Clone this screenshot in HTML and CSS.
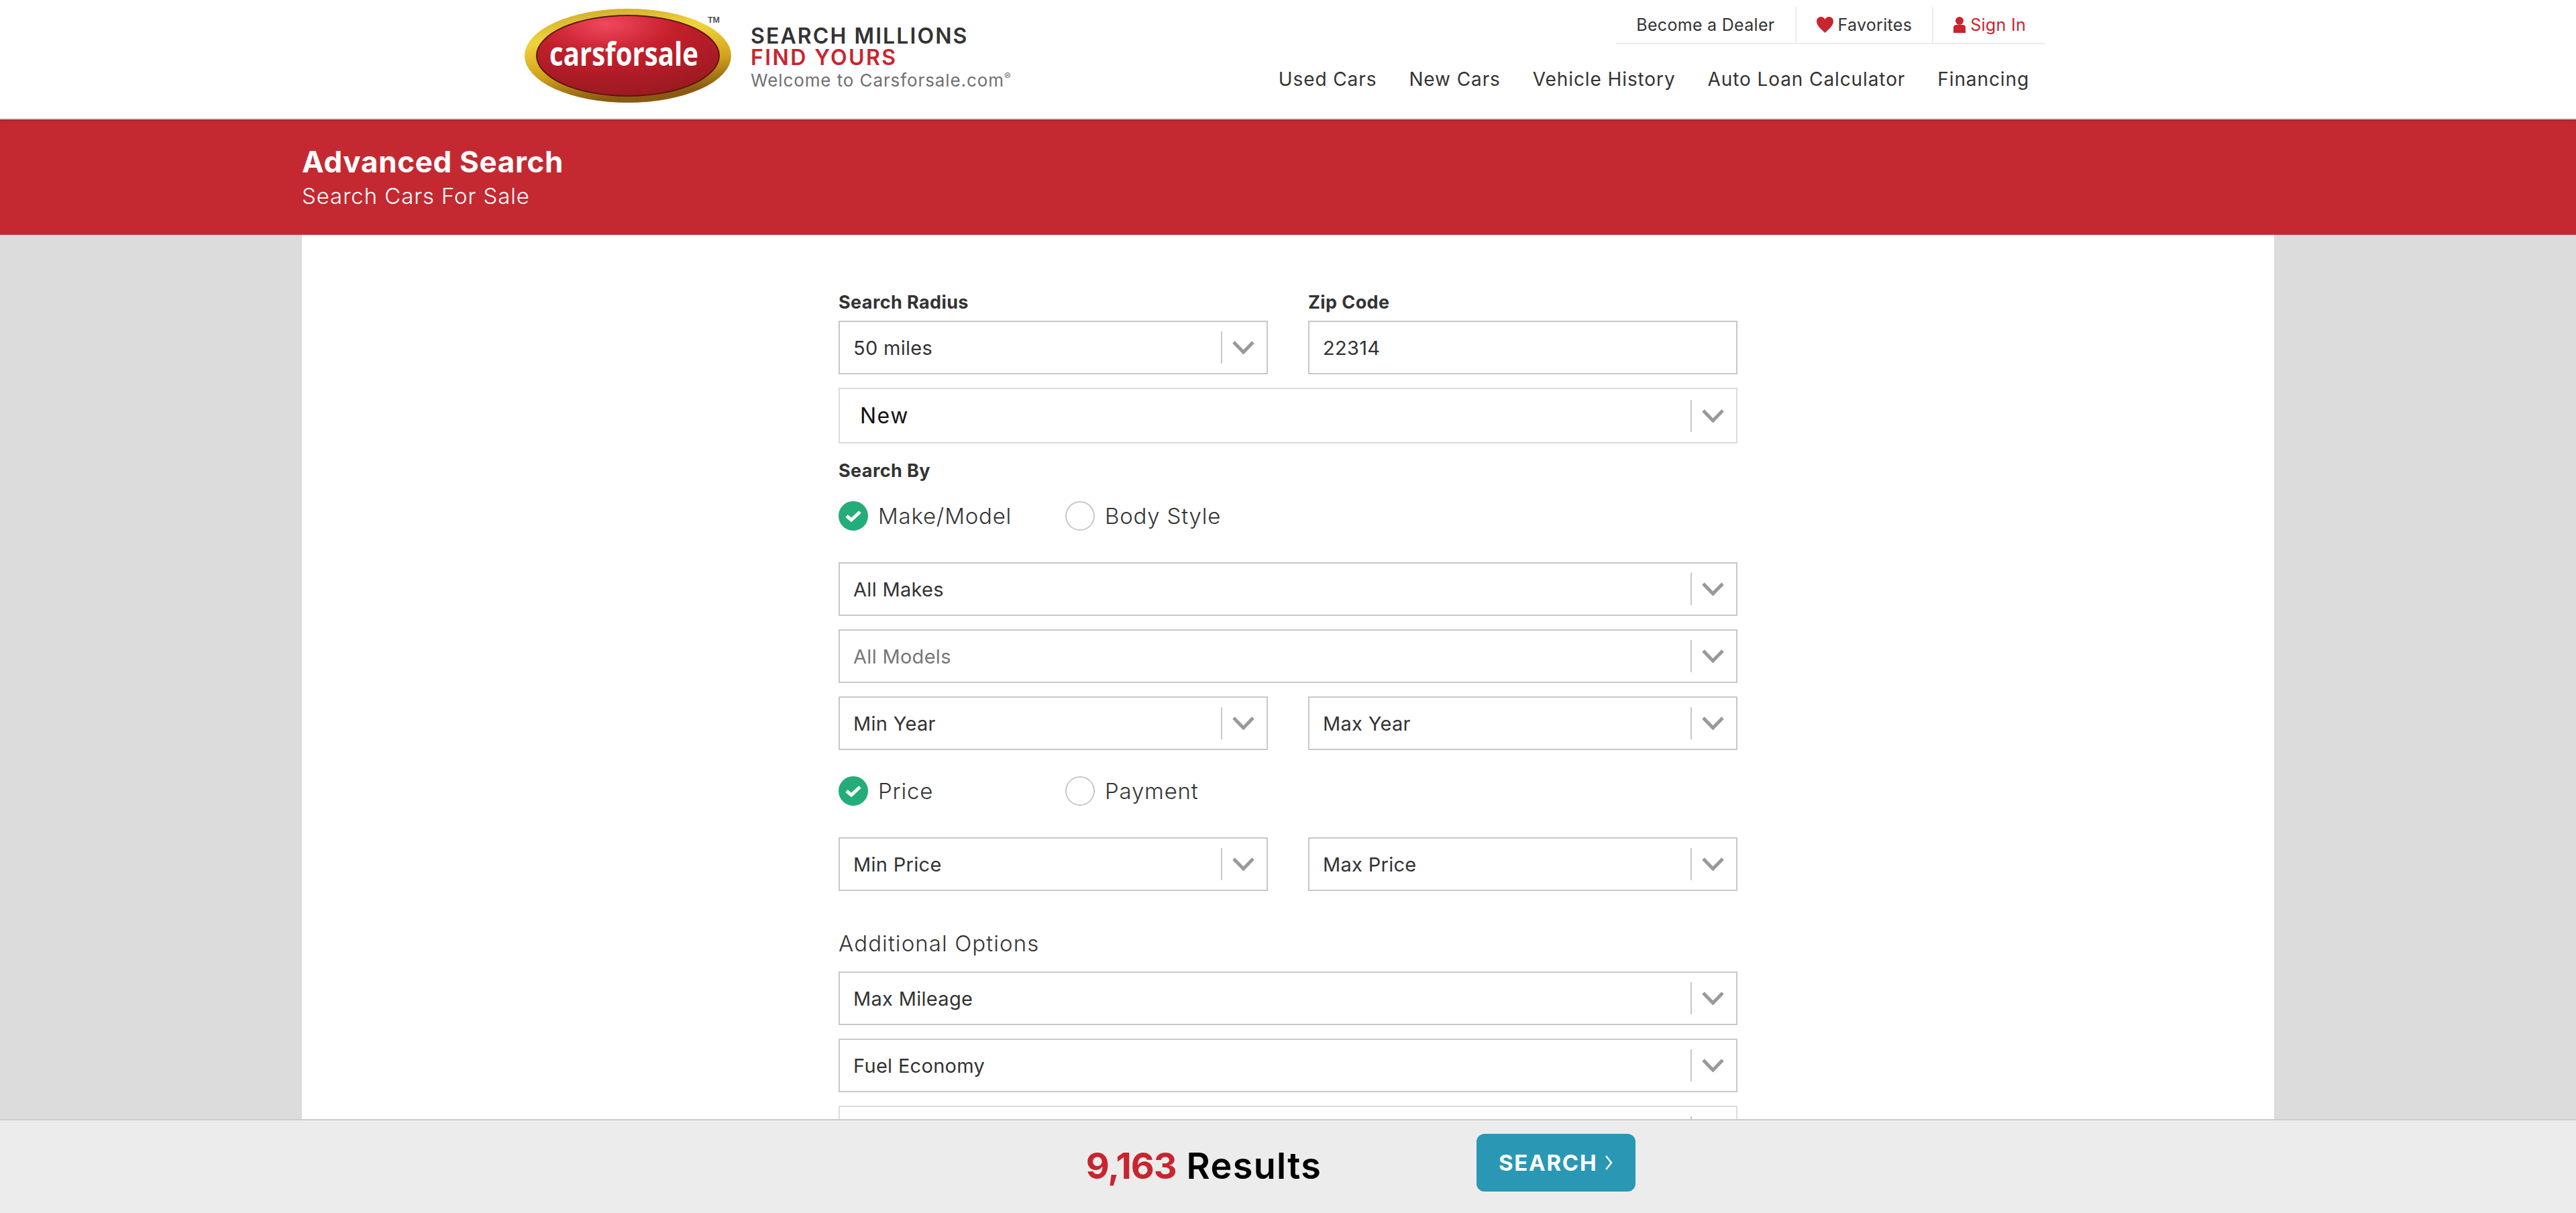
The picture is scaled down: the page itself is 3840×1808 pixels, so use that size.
FILE: index.html
```html
<!DOCTYPE html>
<html lang="en">
<head>
    <meta charset="UTF-8">
    <title>Advanced Search - Carsforsale.com</title>
    <link rel="stylesheet" href="styles.css">
</head>
<body>

    <header class="site-header">
        <div class="brand">
            <svg class="logo" width="320" height="150" viewBox="0 0 320 150">
                <defs>
                    <linearGradient id="gold" x1="0" y1="0" x2="0.25" y2="1">
                        <stop offset="0" stop-color="#c9a227"/>
                        <stop offset="0.35" stop-color="#f0d43c"/>
                        <stop offset="0.7" stop-color="#d2a21c"/>
                        <stop offset="1" stop-color="#8a5a12"/>
                    </linearGradient>
                    <radialGradient id="ruby" cx="0.38" cy="0.1" r="0.85">
                        <stop offset="0" stop-color="#f0485f"/>
                        <stop offset="0.45" stop-color="#c41f2b"/>
                        <stop offset="1" stop-color="#a01a22"/>
                    </radialGradient>
                </defs>
                <ellipse cx="155" cy="80" rx="154" ry="70" fill="url(#gold)"/>
                <ellipse cx="155" cy="80" rx="137" ry="61" fill="#5c1512"/>
                <ellipse cx="155" cy="80" rx="135" ry="59" fill="url(#ruby)"/>
                <text class="logo-word" x="38" y="95" textLength="222" lengthAdjust="spacingAndGlyphs">carsforsale</text>
                <text class="logo-tm" x="274" y="31" textLength="18" lengthAdjust="spacingAndGlyphs">TM</text>
            </svg>
            <div class="tagline">
                <div class="tag-one">SEARCH MILLIONS</div>
                <div class="tag-two">FIND YOURS</div>
                <div class="tag-three">Welcome to Carsforsale.com<sup>®</sup></div>
            </div>
        </div>
        <nav class="site-nav">
            <div class="top-links">
                <a class="top-link">Become a Dealer</a>
                <a class="top-link">
                    <svg class="icon-heart" width="25" height="24" viewBox="0 0 25 24"><path d="M12.5 24C9 20 0 14 0 7C0 3 2.8 0 6.5 0C9.2 0 11.4 1.6 12.5 4C13.6 1.6 15.8 0 18.5 0C22.2 0 25 3 25 7C25 14 16 20 12.5 24Z"/></svg>
                    Favorites
                </a>
                <a class="top-link top-link-red">
                    <svg class="icon-user" width="18" height="24" viewBox="0 0 18 24"><circle cx="9" cy="6" r="6"/><path d="M0 24V16C0 13.5 2 12 4 12H14C16 12 18 13.5 18 16V24Z"/></svg>
                    Sign In
                </a>
            </div>
            <div class="main-links">
                <a>Used Cars</a>
                <a>New Cars</a>
                <a>Vehicle History</a>
                <a>Auto Loan Calculator</a>
                <a>Financing</a>
            </div>
        </nav>
    </header>

    <section class="title-bar">
        <h1>Advanced Search</h1>
        <p>Search Cars For Sale</p>
    </section>

    <main class="page">
        <div class="sheet">
            <form class="search-form">

                <div class="two-col">
                    <div>
                        <div class="field-label">Search Radius</div>
                        <div class="select">
                            <span class="select-text">50 miles</span>
                            <span class="select-sep"></span>
                            <svg class="chevron" width="33" height="20" viewBox="0 0 33 20"><path d="M2 2L16.5 17L31 2"/></svg>
                        </div>
                    </div>
                    <div>
                        <div class="field-label">Zip Code</div>
                        <input class="text-input" type="text" value="22314">
                    </div>
                </div>

                <div class="select select-big">
                    <span class="select-text">New</span>
                    <span class="select-sep"></span>
                    <svg class="chevron" width="33" height="20" viewBox="0 0 33 20"><path d="M2 2L16.5 17L31 2"/></svg>
                </div>

                <div class="field-label search-by">Search By</div>
                <div class="radio-row radio-row-first">
                    <div class="radio-item">
                        <span class="radio radio-on">
                            <svg width="24" height="20" viewBox="0 0 24 20"><path d="M2 10L9 16L22 4"/></svg>
                        </span>
                        Make/Model
                    </div>
                    <div class="radio-item">
                        <span class="radio"></span>
                        Body Style
                    </div>
                </div>

                <div class="select select-makes">
                    <span class="select-text">All Makes</span>
                    <span class="select-sep"></span>
                    <svg class="chevron" width="33" height="20" viewBox="0 0 33 20"><path d="M2 2L16.5 17L31 2"/></svg>
                </div>
                <div class="select">
                    <span class="select-text select-text-off">All Models</span>
                    <span class="select-sep"></span>
                    <svg class="chevron" width="33" height="20" viewBox="0 0 33 20"><path d="M2 2L16.5 17L31 2"/></svg>
                </div>
                <div class="two-col two-col-next">
                    <div class="select">
                        <span class="select-text">Min Year</span>
                        <span class="select-sep"></span>
                        <svg class="chevron" width="33" height="20" viewBox="0 0 33 20"><path d="M2 2L16.5 17L31 2"/></svg>
                    </div>
                    <div class="select">
                        <span class="select-text">Max Year</span>
                        <span class="select-sep"></span>
                        <svg class="chevron" width="33" height="20" viewBox="0 0 33 20"><path d="M2 2L16.5 17L31 2"/></svg>
                    </div>
                </div>

                <div class="radio-row radio-row-price">
                    <div class="radio-item">
                        <span class="radio radio-on">
                            <svg width="24" height="20" viewBox="0 0 24 20"><path d="M2 10L9 16L22 4"/></svg>
                        </span>
                        Price
                    </div>
                    <div class="radio-item">
                        <span class="radio"></span>
                        Payment
                    </div>
                </div>

                <div class="two-col two-col-price">
                    <div class="select">
                        <span class="select-text">Min Price</span>
                        <span class="select-sep"></span>
                        <svg class="chevron" width="33" height="20" viewBox="0 0 33 20"><path d="M2 2L16.5 17L31 2"/></svg>
                    </div>
                    <div class="select">
                        <span class="select-text">Max Price</span>
                        <span class="select-sep"></span>
                        <svg class="chevron" width="33" height="20" viewBox="0 0 33 20"><path d="M2 2L16.5 17L31 2"/></svg>
                    </div>
                </div>

                <h2 class="options-title">Additional Options</h2>
                <div class="select select-mileage">
                    <span class="select-text">Max Mileage</span>
                    <span class="select-sep"></span>
                    <svg class="chevron" width="33" height="20" viewBox="0 0 33 20"><path d="M2 2L16.5 17L31 2"/></svg>
                </div>
                <div class="select">
                    <span class="select-text">Fuel Economy</span>
                    <span class="select-sep"></span>
                    <svg class="chevron" width="33" height="20" viewBox="0 0 33 20"><path d="M2 2L16.5 17L31 2"/></svg>
                </div>
                <div class="select select-light">
                    <span class="select-text"></span>
                    <span class="select-sep"></span>
                    <svg class="chevron" width="33" height="20" viewBox="0 0 33 20"><path d="M2 2L16.5 17L31 2"/></svg>
                </div>

            </form>
        </div>
    </main>

    <footer class="results-bar">
        <div class="results-count"><span class="results-num">9,163</span> Results</div>
        <button class="search-btn" type="button">
            SEARCH
            <svg width="14" height="24" viewBox="0 0 14 24"><path d="M3 2L11 12L3 22"/></svg>
        </button>
    </footer>

</body>
</html>
```

FILE: styles.css
```css
/* base */
html, body {
    margin: 0;
    padding: 0;
    height: 1808px;
    overflow: hidden;
}
body {
    display: flex;
    flex-direction: column;
    font-family: Inter, "Liberation Sans", sans-serif;
    color: #333;
    background-color: #dcdcdc;
}

/* header */
.site-header {
    display: flex;
    justify-content: space-between;
    flex: none;
    height: 176px;
    padding: 0 790px 0 781px;
    background-color: #fff;
    border-bottom: 2px solid #ddd;
}
.brand {
    display: flex;
    align-items: flex-start;
}
.logo {
    margin-top: 3px;
    margin-right: 18px;
}
.logo-word {
    font-family: "Open Sans", sans-serif;
    font-size: 48px;
    font-weight: 700;
    fill: #fff;
}
.logo-tm {
    font-family: "Liberation Sans", sans-serif;
    font-size: 12px;
    font-weight: 700;
    fill: #555;
}
.tagline {
    padding-top: 38px;
}
.tag-one, .tag-two {
    font-size: 32px;
    font-weight: 600;
    line-height: 32px;
    letter-spacing: 2.1px;
}
.tag-two {
    color: #c8252f;
    letter-spacing: 2.4px;
}
.tag-three {
    margin-top: 3px;
    font-size: 26px;
    line-height: 30px;
    color: #707070;
    letter-spacing: 0.9px;
}
.tag-three sup {
    font-size: 15px;
    line-height: 0;
}
.site-nav {
    display: flex;
    flex-direction: column;
    align-items: flex-end;
}
.top-links {
    display: flex;
    height: 54px;
    margin-top: 10px;
    border-bottom: 2px solid #eee;
}
.top-link {
    display: flex;
    align-items: center;
    gap: 7px;
    padding: 0 30px;
    font-size: 25px;
    border-right: 2px solid #eee;
    letter-spacing: 0.3px;
}
.top-link:last-child {
    border-right: none;
}
.top-link-red {
    color: #c8252f;
}
.icon-heart, .icon-user {
    fill: #c8252f;
}
.main-links {
    display: flex;
    gap: 48px;
    margin-top: 34px;
    padding-right: 25px;
    font-size: 28px;
    line-height: 36px;
    letter-spacing: 0.9px;
}

/* red title bar */
.title-bar {
    flex: none;
    box-sizing: border-box;
    height: 172px;
    padding: 36px 0 0 450px;
    background-color: #c42931;
    color: #fff;
    box-shadow: inset 0 4px 4px -2px rgba(0, 0, 0, 0.12);
}
.title-bar h1 {
    margin: 0;
    font-size: 44px;
    font-weight: 700;
    line-height: 54px;
    letter-spacing: 0.65px;
}
.title-bar p {
    margin: 4px 0 0;
    font-size: 33px;
    line-height: 40px;
    font-weight: 300;
    letter-spacing: 0.9px;
}

/* form sheet */
.page {
    flex: 1;
    min-height: 0;
    overflow: hidden;
}
.sheet {
    width: 2940px;
    height: 100%;
    margin: 0 auto;
    background-color: #fff;
}
.search-form {
    width: 1340px;
    margin: 0 auto;
    padding-top: 86px;
}
.two-col {
    display: grid;
    grid-template-columns: 640px 640px;
    gap: 60px;
}
.two-col-next {
    margin-top: 20px;
}
.two-col-price {
    margin-top: 47px;
}
.field-label {
    height: 28px;
    margin-bottom: 14px;
    font-size: 27px;
    font-weight: 700;
    line-height: 29px;
    letter-spacing: 0.4px;
}
.search-by {
    margin-top: 26px;
    margin-bottom: 0;
}
.select {
    display: flex;
    align-items: center;
    box-sizing: border-box;
    height: 80px;
    padding: 0 18px 0 20px;
    background-color: #fff;
    border: 2px solid #c8c8c8;
}
.select + .select {
    margin-top: 20px;
}
.two-col .select + .select {
    margin-top: 0;
}
.select-text {
    flex: 1;
    font-size: 29px;
    letter-spacing: 0.3px;
}
.select-text-off {
    color: #777;
}
.select-sep {
    flex: none;
    width: 2px;
    height: 48px;
    margin-right: 15px;
    background-color: #c8c8c8;
}
.chevron {
    flex: none;
    fill: none;
    stroke: #999;
    stroke-width: 5;
}
.select-big {
    height: 83px;
    margin-top: 20px;
    padding-left: 30px;
    border-color: #dcdcdc;
}
.select-big .select-text {
    font-size: 32px;
    color: #111;
    letter-spacing: 1.5px;
}
.select-light {
    border-color: #dcdcdc;
}
.select-makes {
    margin-top: 47px;
}
.select-mileage {
    margin-top: 22px;
}
.text-input {
    display: block;
    box-sizing: border-box;
    width: 100%;
    height: 80px;
    padding: 0 20px;
    border: 2px solid #c8c8c8;
    border-radius: 0;
    font-family: inherit;
    font-size: 29px;
    letter-spacing: 0.3px;
    color: #333;
    outline: none;
}
.radio-row {
    display: flex;
    height: 44px;
}
.radio-row-first {
    margin-top: 32px;
}
.radio-row-price {
    margin-top: 39px;
}
.radio-item {
    display: flex;
    align-items: center;
    gap: 15px;
    width: 338px;
    font-size: 33px;
    font-weight: 300;
    letter-spacing: 0.8px;
}
.radio {
    display: flex;
    align-items: center;
    justify-content: center;
    box-sizing: border-box;
    width: 44px;
    height: 44px;
    border: 2px solid #c8c8c8;
    border-radius: 50%;
}
.radio-on {
    background-color: #24ad78;
    border-color: #24ad78;
}
.radio-on svg {
    fill: none;
    stroke: #fff;
    stroke-width: 5;
}
.options-title {
    margin: 59px 0 0;
    font-size: 33px;
    font-weight: 300;
    line-height: 39px;
    letter-spacing: 1.1px;
}

/* results bar */
.results-bar {
    display: flex;
    align-items: flex-start;
    justify-content: center;
    gap: 231px;
    flex: none;
    box-sizing: border-box;
    height: 140px;
    padding: 20px 0 0 217px;
    background-color: #ececec;
    border-top: 2px solid #ccc;
}
.results-count {
    margin-top: 5px;
    font-size: 54px;
    font-weight: 600;
    line-height: 86px;
    letter-spacing: 1.3px;
    color: #000;
}
.results-num {
    font-weight: 700;
    letter-spacing: -1px;
    color: #c8252f;
}
.search-btn {
    display: flex;
    align-items: center;
    justify-content: center;
    gap: 10px;
    width: 237px;
    height: 86px;
    padding: 0;
    border: none;
    border-radius: 12px;
    background-color: #2a97b5;
    color: #fff;
    font-family: inherit;
    font-size: 33px;
    font-weight: 700;
    letter-spacing: 1.7px;
}
.search-btn svg {
    fill: none;
    stroke: #fff;
    stroke-width: 2.5;
}
```
